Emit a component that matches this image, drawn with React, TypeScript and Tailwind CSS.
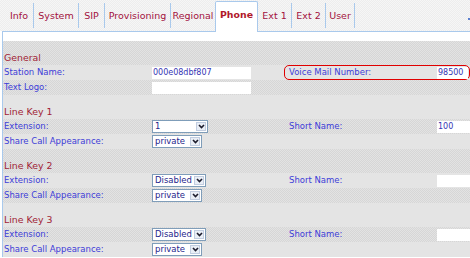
import React from 'react';

const tex = 'bg-[image:repeating-conic-gradient(#d6d6d6_0%_25%,#e3e3e3_0%_50%)] bg-[length:2px_2px]';
const plain = 'bg-[#e4e4e4]';

const tabs = [
  { label: 'Info', w: 'w-[28px]', sep: true },
  { label: 'System', w: 'w-[44px]', sep: true },
  { label: 'SIP', w: 'w-[25px]', sep: true },
  { label: 'Provisioning', w: 'w-[65px]', sep: true },
  { label: 'Regional', w: 'w-[44px]', sep: false },
  { label: 'Phone', w: 'w-[43px]', sep: false, active: true },
  { label: 'Ext 1', w: 'w-[33px]', sep: true },
  { label: 'Ext 2', w: 'w-[33px]', sep: true },
  { label: 'User', w: 'w-[28px]', sep: true },
];

function Chevron() {
  return (
    <svg width="7" height="5" viewBox="0 0 7 5">
      <path d="M1 1 L3.5 3.6 L6 1" stroke="#1d1d2e" strokeWidth="1.6" fill="none" />
    </svg>
  );
}

function Select({ value, w }: { value: string; w: string }) {
  return (
    <div className={`flex h-[13px] border border-[#7f9db9] bg-white ${w}`}>
      <span className="flex-1 pl-[2px] text-[8.5px] leading-[11px] text-[#26268c]">{value}</span>
      <span className="m-[1px] flex w-[10px] items-center justify-center border border-[#c2cde0] bg-[#e9eef6]">
        <Chevron />
      </span>
    </div>
  );
}

function TextBox({ value, w }: { value?: string; w: string }) {
  return (
    <div className={`h-[12px] shrink-0 bg-white pl-[1px] text-[8px] leading-[12px] text-[#3535b4] ${w}`}>
      {value}
    </div>
  );
}

function Header({ title, bg }: { title: string; bg: string }) {
  return (
    <div className={`flex h-[24px] items-end pl-[1px] ${bg}`}>
      <span className="text-[9.4px] leading-[14px] text-[#a11d36]">{title}</span>
    </div>
  );
}

function Field({
  label,
  control,
  rightLabel,
  rightControl,
  bg,
  highlight,
}: {
  label: string;
  control?: React.ReactNode;
  rightLabel?: string;
  rightControl?: React.ReactNode;
  bg: string;
  highlight?: boolean;
}) {
  return (
    <div className={`flex h-[15px] items-center ${bg}`}>
      <div className="w-[149px] shrink-0 pl-[1px] text-[8.5px] leading-[15px] text-[#3d3dd8]">{label}</div>
      <div className="w-[132px] shrink-0">{control}</div>
      <div
        className={`flex h-[15px] w-[186px] shrink-0 items-center rounded-[5px] border ${
          highlight ? 'border-[#e00000]' : 'border-transparent'
        }`}
      >
        <div className="w-[152px] shrink-0 pl-[4px] text-[8.5px] leading-[13px] text-[#3d3dd8]">{rightLabel}</div>
        {rightControl}
      </div>
    </div>
  );
}

export default function App() {
  return (
    <div className="h-[258px] w-[470px] overflow-hidden bg-white font-['DejaVu_Sans',Verdana,sans-serif]">
      <div className="flex h-[31px] bg-[image:repeating-conic-gradient(#ededed_0%_25%,#f6f6f6_0%_50%)] bg-[length:2px_2px] pl-[5px]">
        {tabs.map((t) =>
          t.active ? (
            <div
              key={t.label}
              className={`relative z-10 mt-[1px] flex h-[31px] items-start justify-center rounded-t-[2px] border border-b-0 border-[#a9c9ec] bg-white pt-[6px] ${t.w}`}
            >
              <span className="text-[9.4px] font-bold leading-[13px] text-[#b0172a]">{t.label}</span>
            </div>
          ) : (
            <React.Fragment key={t.label}>
              <div className={`flex h-[31px] items-center justify-center ${t.w}`}>
                <span className="text-[9.5px] leading-[13px] text-[#a3123e]">{t.label}</span>
              </div>
              {t.sep && <div className="mt-[3px] h-[25px] w-[1px] bg-[#a9c9ec]" />}
            </React.Fragment>
          )
        )}
        <div className="ml-auto mt-[18px] h-[2px] w-[2px] bg-[#5a7fd0]" />
      </div>

      <div className="ml-[2px] border-l border-t border-[#a9c9ec] pt-[9px]">
        <Header title="General" bg={tex} />
        <Field
          bg={plain}
          label="Station Name:"
          control={<TextBox value="000e08dbf807" w="w-[99px]" />}
          rightLabel="Voice Mail Number:"
          rightControl={<TextBox value="98500" w="w-[31px]" />}
          highlight
        />
        <Field bg={tex} label="Text Logo:" control={<TextBox w="w-[99px]" />} />

        <Header title="Line Key 1" bg={plain} />
        <Field
          bg={tex}
          label="Extension:"
          control={<Select value="1" w="w-[56px]" />}
          rightLabel="Short Name:"
          rightControl={<TextBox value="100" w="w-[40px]" />}
        />
        <Field bg={plain} label="Share Call Appearance:" control={<Select value="private" w="w-[50px]" />} />

        <Header title="Line Key 2" bg={tex} />
        <Field
          bg={plain}
          label="Extension:"
          control={<Select value="Disabled" w="w-[54px]" />}
          rightLabel="Short Name:"
          rightControl={<TextBox w="w-[40px]" />}
        />
        <Field bg={tex} label="Share Call Appearance:" control={<Select value="private" w="w-[50px]" />} />

        <Header title="Line Key 3" bg={plain} />
        <Field
          bg={tex}
          label="Extension:"
          control={<Select value="Disabled" w="w-[54px]" />}
          rightLabel="Short Name:"
          rightControl={<TextBox w="w-[40px]" />}
        />
        <Field bg={plain} label="Share Call Appearance:" control={<Select value="private" w="w-[50px]" />} />
      </div>
    </div>
  );
}
